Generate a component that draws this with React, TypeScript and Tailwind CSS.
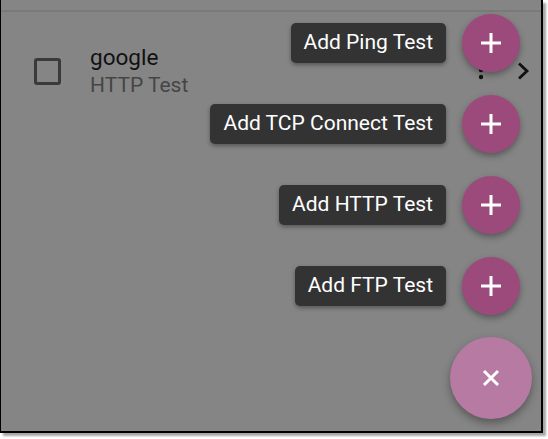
import React from "react";

const font = { fontFamily: "Roboto, 'Liberation Sans', sans-serif" };

const actions = ["Add Ping Test", "Add TCP Connect Test", "Add HTTP Test", "Add FTP Test"];

function PlusIcon() {
  return (
    <svg width="22" height="22" viewBox="0 0 22 22">
      <path d="M11 1v20M1 11h20" stroke="white" strokeWidth="3" />
    </svg>
  );
}

function CloseIcon() {
  return (
    <svg width="18" height="18" viewBox="0 0 18 18">
      <path d="M2 2l14 14M16 2L2 16" stroke="white" strokeWidth="3" />
    </svg>
  );
}

function FabMenu() {
  return (
    <div className="absolute right-[9px] top-[14px] flex flex-col items-end gap-[23px]">
      {actions.map((label) => (
        <div key={label} className="flex items-center gap-[4px]">
          <div className="h-[40px] flex items-center px-[13px] rounded-[5px] bg-[#333333] text-white text-[21px] shadow-[0_2px_4px_rgba(0,0,0,0.35)]">
            {label}
          </div>
          <div className="w-[82px] flex justify-center">
            <button className="w-[58px] h-[58px] rounded-full bg-[#9c4a7c] flex items-center justify-center shadow-[0_3px_6px_rgba(0,0,0,0.35)]">
              <PlusIcon />
            </button>
          </div>
        </div>
      ))}
      <button className="-mt-px w-[82px] h-[82px] rounded-full bg-[#b77ba3] flex items-center justify-center shadow-[0_4px_8px_rgba(0,0,0,0.35)]">
        <CloseIcon />
      </button>
    </div>
  );
}

export default function App() {
  return (
    <div className="w-[548px] h-[439px] bg-white" style={font}>
      <div className="relative w-[543px] h-[433px] bg-[#858585] border-l border-r-2 border-b-2 border-black shadow-[3px_3px_2px_rgba(0,0,0,0.35)] overflow-hidden">
        <div className="mt-[10px] h-[2px] bg-[#7a7a7a]" />
        <div className="flex items-center pl-[33px] pt-[31px]">
          <div className="w-[27px] h-[27px] rounded-[3px] border-[3px] border-[#3a3a3a]" />
          <div className="ml-[29px] flex flex-col">
            <span className="text-[22.5px] leading-[28px] text-[#111111]">google</span>
            <span className="text-[21px] leading-[28px] text-[#454545]">HTTP Test</span>
          </div>
          <div className="flex-1" />
          <svg width="6" height="20" viewBox="0 0 6 20" className="mr-[33px] -mt-[2px]">
            <circle cx="3" cy="3" r="2.2" fill="#111" />
            <circle cx="3" cy="10" r="2.2" fill="#111" />
            <circle cx="3" cy="17" r="2.2" fill="#111" />
          </svg>
          <svg width="13" height="18" viewBox="0 0 13 18" className="mr-[11px]">
            <path d="M2 1.5l8 7.5-8 7.5" stroke="#111" strokeWidth="2.8" fill="none" />
          </svg>
        </div>
        <FabMenu />
      </div>
    </div>
  );
}
